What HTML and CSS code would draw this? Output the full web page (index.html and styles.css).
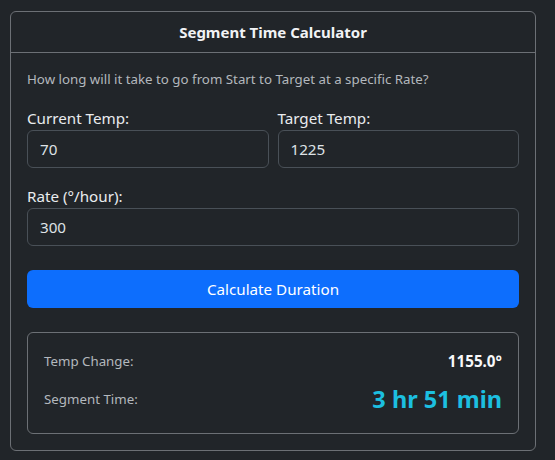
FILE: index.html
```html
<!DOCTYPE html>
<html lang="en">
<head>
<meta charset="utf-8">
<title>Segment Time Calculator</title>
<link rel="stylesheet" href="styles.css">
</head>
<body>
<div class="card">
  <div class="card-header">Segment Time Calculator</div>
  <div class="card-body">
    <p class="subtitle">How long will it take to go from Start to Target at a specific Rate?</p>
    <div class="row">
      <div class="field">
        <label class="form-label">Current Temp:</label>
        <input class="form-control" type="text" value="70">
      </div>
      <div class="field">
        <label class="form-label">Target Temp:</label>
        <input class="form-control" type="text" value="1225">
      </div>
    </div>
    <div class="field field-rate">
      <label class="form-label">Rate (°/hour):</label>
      <input class="form-control" type="text" value="300">
    </div>
    <button class="btn">Calculate Duration</button>
    <div class="result">
      <div class="result-row">
        <span class="result-label">Temp Change:</span>
        <span class="result-value">1155.0°</span>
      </div>
      <div class="result-row result-row-time">
        <span class="result-label">Segment Time:</span>
        <span class="result-time">3 hr 51 min</span>
      </div>
    </div>
  </div>
</div>
</body>
</html>
```

FILE: styles.css
```css
* { box-sizing: border-box; }
html, body { margin: 0; }
body {
  background: #212529;
  color: #dee2e6;
  font-family: "Noto Sans", "Open Sans", sans-serif;
  font-size: 15.2px;
  line-height: 24px;
  padding: 11px 20px 0 10px;
}
.card {
  width: 526px;
  border: 1px solid #6c7075;
  border-radius: 6px;
  background: #212529;
}
.card-header {
  text-align: center;
  font-weight: 700;
  font-size: 15px;
  line-height: 24px;
  padding: 8px 16px;
  border-bottom: 1px solid #6c7075;
  color: #f1f3f5;
}
.card-body { padding: 16px; }
.subtitle {
  margin: 0 0 16px;
  font-size: 13.3px;
  line-height: 21px;
  color: #b3b8bd;
}
.row {
  display: grid;
  grid-template-columns: 1fr 1fr;
  gap: 9px;
  margin-bottom: 16px;
}
.field { display: flex; flex-direction: column; }
.field-rate { margin-bottom: 24px; }
.form-label { display: block; margin: 0; line-height: 24px; color: #e9ecef; }
.form-control {
  display: block;
  width: 100%;
  height: 38px;
  padding: 6px 12px;
  font: inherit;
  line-height: 24px;
  color: #dee2e6;
  background: #212529;
  border: 1px solid #495057;
  border-radius: 6px;
}
.btn {
  display: block;
  width: 100%;
  height: 38px;
  font: inherit;
  color: #fff;
  background: #0d6efd;
  border: 0;
  border-radius: 6px;
  margin-bottom: 24px;
}
.result {
  border: 1px solid #6c7075;
  border-radius: 6px;
  padding: 16px;
}
.result-row {
  display: flex;
  justify-content: space-between;
  align-items: center;
  line-height: 24px;
}
.result-row-time { margin-top: 8px; line-height: 36px; }
.result-label { font-size: 13.3px; color: #b3b8bd; }
.result-value { font-weight: 700; color: #f8f9fa; }
.result-time { font-size: 23.5px; font-weight: 700; color: #1cbfe0; }
```
